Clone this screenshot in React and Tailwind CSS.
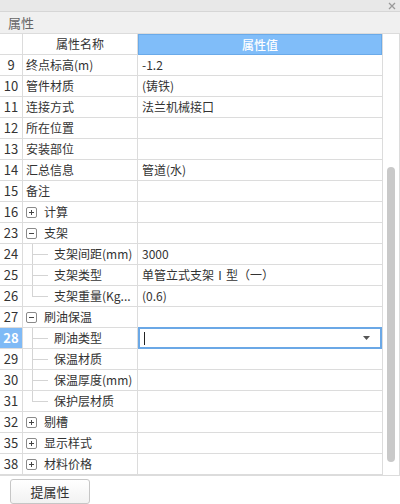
import React from "react";

const rows = [
  { no: 9, name: "终点标高(m)", value: "-1.2" },
  { no: 10, name: "管件材质", value: "(铸铁)" },
  { no: 11, name: "连接方式", value: "法兰机械接口" },
  { no: 12, name: "所在位置" },
  { no: 13, name: "安装部位" },
  { no: 14, name: "汇总信息", value: "管道(水)" },
  { no: 15, name: "备注" },
  { no: 16, name: "计算", group: "plus" },
  { no: 23, name: "支架", group: "minus" },
  { no: 24, name: "支架间距(mm)", value: "3000", child: true },
  { no: 25, name: "支架类型", value: "单管立式支架Ⅰ型（一）", child: true },
  { no: 26, name: "支架重量(Kg...", value: "(0.6)", child: true, last: true },
  { no: 27, name: "刷油保温", group: "minus" },
  { no: 28, name: "刷油类型", child: true, editing: true },
  { no: 29, name: "保温材质", child: true },
  { no: 30, name: "保温厚度(mm)", child: true },
  { no: 31, name: "保护层材质", child: true, last: true },
  { no: 32, name: "剔槽", group: "plus" },
  { no: 35, name: "显示样式", group: "plus" },
  { no: 38, name: "材料价格", group: "plus" },
];

const ExpandBox = ({ type }) => (
  <div className="ml-[3px] w-[11px] h-[11px] border border-[#8a8a8a] rounded-[2px] bg-white flex items-center justify-center shrink-0">
    <svg width="7" height="7" viewBox="0 0 7 7">
      <path d="M1 3.5h5" stroke="#444" strokeWidth="1" />
      {type === "plus" && <path d="M3.5 1v5" stroke="#444" strokeWidth="1" />}
    </svg>
  </div>
);

const TreeLine = ({ last }) => (
  <div className="ml-[9px] w-[16px] h-full flex flex-col shrink-0">
    <div className="flex-1 border-l border-b border-[#d4d4d4]" />
    <div className={`flex-1 ${last ? "" : "border-l border-[#d4d4d4]"}`} />
  </div>
);

const Row = ({ row }) => (
  <div className="flex h-[21px] border-b border-[#dcdcdc]">
    <div
      className={`w-[23px] border-r border-[#dcdcdc] flex items-center justify-center shrink-0 text-[13px] ${
        row.editing ? "bg-[#7fbaf6] text-white font-bold" : "text-[#333]"
      }`}
    >
      {row.no}
    </div>
    <div className="w-[115px] border-r border-[#dcdcdc] flex items-center shrink-0 overflow-hidden whitespace-nowrap">
      {row.child ? (
        <>
          <TreeLine last={row.last} />
          <span className="ml-[6px]">{row.name}</span>
        </>
      ) : row.group ? (
        <>
          <ExpandBox type={row.group} />
          <span className="ml-[7px]">{row.name}</span>
        </>
      ) : (
        <span className="ml-[3px]">{row.name}</span>
      )}
    </div>
    {row.editing ? (
      <div className="flex-1 -mt-[1px] h-[22px] border-2 border-[#6ba8e6] flex items-center pl-[4px] pr-[10px]">
        <div className="w-px h-[13px] bg-[#222]" />
        <div className="flex-1" />
        <svg width="7" height="4" viewBox="0 0 7 4">
          <path d="M0 0h7L3.5 4z" fill="#555" />
        </svg>
      </div>
    ) : (
      <div className="flex-1 flex items-center pl-[4px] whitespace-nowrap overflow-hidden">
        {row.value}
      </div>
    )}
  </div>
);

export default function App() {
  return (
    <div
      className="w-[400px] h-[504px] bg-white flex flex-col text-[12px] text-[#333]"
      style={{ fontFamily: '"Noto Sans CJK SC", "Noto Sans", sans-serif' }}
    >
      {/* window strip */}
      <div className="h-[12px] bg-[#e8e8e8] border-b border-[#d6d6d6] flex items-center justify-end pr-[4px]">
        <svg width="8" height="8" viewBox="0 0 8 8">
          <path d="M1 1l6 6M7 1L1 7" stroke="#999" strokeWidth="1.3" />
        </svg>
      </div>

      {/* title */}
      <div className="h-[22px] bg-[#f0f0f0] border-b border-[#dcdcdc] flex items-center pl-[8px] text-[#666] text-[13px]">
        属性
      </div>

      {/* grid + scrollbar */}
      <div className="flex border-r border-b border-[#dcdcdc]">
        <div className="w-[383px] border-r border-[#dcdcdc] flex flex-col">
          <div className="flex h-[21px] border-b border-[#dcdcdc]">
            <div className="w-[23px] border-r border-[#dcdcdc] shrink-0" />
            <div className="w-[115px] border-r border-[#dcdcdc] flex items-center justify-center shrink-0">
              属性名称
            </div>
            <div className="flex-1 bg-[#80bdf9] border border-[#6aaae9] -mb-[1px] flex items-center justify-center text-white font-medium">
              属性值
            </div>
          </div>
          {rows.map((row) => (
            <Row key={row.no} row={row} />
          ))}
        </div>
        <div className="flex-1 pt-[133px]">
          <div className="w-[8px] h-[295px] mx-auto bg-[#c9c9c9] rounded-full" />
        </div>
      </div>

      {/* footer */}
      <div className="pl-[10px] pt-[3px]">
        <button className="w-[80px] h-[25px] border border-[#c6c6c6] rounded-[3px] bg-gradient-to-b from-white to-[#f2f2f2] text-[#333] text-[13px] flex items-center justify-center">
          提属性
        </button>
      </div>
    </div>
  );
}
